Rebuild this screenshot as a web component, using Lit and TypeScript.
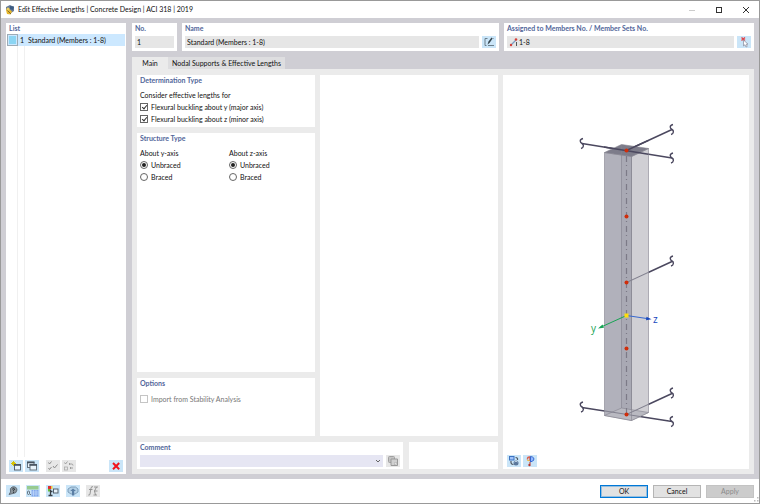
import { LitElement, html, css, svg } from "lit";
import { customElement, property } from "lit/decorators.js";

const icons: Record<string, unknown> = {
  edit: svg`<path d="M5.500 2.500H3V9.500H4.500M6 9.500H12" stroke="#6b7f8c" fill="none"/><path d="M5.500 8.500L6.500 5.500L9.500 1.500L10.600 2.500L7.500 7Z" fill="#34454f"/><path d="M10 2.500H12" stroke="#8a9aa5" stroke-width=".7"/>`,
  pick: svg`<path d="M4.500 1.500L8 4.500M8 1.500L4.500 4.500" stroke="#e0454a" stroke-width="1.400"/><path d="M6.500 4V10L8 8.700L9 11L10.200 10.400L9.300 8.200H11Z" fill="#fff" stroke="#889" stroke-width=".7"/>`,
  create: svg`<path d="M4.500 1V6M2 3.500H7M2.800 1.800L6.200 5.200M6.200 1.800L2.800 5.200" stroke="#d9c400" stroke-width="1"/><rect x="5.500" y="4.500" width="6" height="5.500" fill="#e8f3fb" stroke="#4a5663" stroke-width=".9"/><path d="M5 5H12" stroke="#4a5663" stroke-width="1.600"/>`,
  copy: svg`<rect x="2.500" y="2" width="6.500" height="5.500" fill="#e8f3fb" stroke="#5a6671" stroke-width=".9"/><path d="M2 2.500H9.500" stroke="#45525f" stroke-width="1.600"/><rect x="5" y="4.500" width="6.500" height="5.500" fill="#e8f3fb" stroke="#5a6671" stroke-width=".9"/><path d="M4.500 5H12" stroke="#45525f" stroke-width="1.600"/>`,
  checks: svg`<path d="M2.500 2.500L3.500 4L5.500 1.500M2.500 8L3.500 9.500L5.500 7M7 6L8.500 8L11.500 4.500" fill="none" stroke="#8d8d8d"/>`,
  invert: svg`<path d="M2.500 2.500L3.500 4L5.500 1.500M7 4H9.500Q11 4 11 5.500M8 3L7 4L8 5M11 8H8M9 7L8 8L9 9" fill="none" stroke="#979797" stroke-width=".9"/><rect x="2.500" y="7" width="3" height="3" fill="none" stroke="#aaa" stroke-width=".8"/>`,
  remove: svg`<path d="M4 3L10.200 9.200M10.200 3L4 9.200" stroke="#f1121c" stroke-width="2"/>`,
  help: svg`<path d="M3 9.500L4.500 7Q3.500 3 6 2Q10.500 .800 11 5Q10.500 8.500 7 8.500Z" fill="#8b959c" stroke="#535e67" stroke-width=".8"/><path d="M6.300 4.200Q7.500 2.700 8.600 4L7.500 5.500V6.300M7.500 7V7.800" stroke="#222c33" fill="none"/>`,
  units: svg`<rect x="1" y="1" width="11.500" height="3.500" fill="#97cb90"/><rect x="5.500" y="5" width="7" height="6.500" fill="#82a8ed"/><path d="M7.500 5V11.500M10 5V11.500M5.500 7H12.500M5.500 9H12.500" stroke="#cfe0fb" stroke-width=".6"/><rect x="1.500" y="6" width="2" height="3.500" rx="1" fill="none" stroke="#4c5a66" stroke-width=".8"/><path d="M4.500 9V10" stroke="#4c5a66" stroke-width=".8"/>`,
  display: svg`<rect x="2" y="1" width="3" height="3" fill="#df3131"/><rect x="5" y="1" width="1.500" height="3" fill="#e9cf45"/><rect x="2" y="4" width="2" height="2.500" fill="#65bc37"/><path d="M4.500 4.500V10.500M2.500 10.500H6.500M4.500 6.500H6.500" stroke="#394047" stroke-width="1.300"/><rect x="7.500" y="4" width="4.500" height="4" fill="#e8f3fb" stroke="#53606d"/>`,
  view: svg`<path d="M2 4L5 2H9.500L12 4V7L9 9H5L2 7Z" fill="#b3d0e6" stroke="#6e91ac" stroke-width=".8"/><path d="M7 3.500L10 6H8.200V10.500H6V6H4.200Z" fill="#5b7fa5"/>`,
  formula: svg`<path d="M7 1.700Q5.300 1 4.900 3.500L4 9Q3.600 10.700 2.300 10M3 4.500H6.500M8 2H12M8 6H11.500M7.500 10H11M10.500 2L8.500 6L9.500 10" fill="none" stroke="#8c8c8c" stroke-width=".9"/>`,
  stack: svg`<rect x="2.500" y="1.500" width="6" height="6" rx="1" fill="#c4c4c4" stroke="#a0a0a0"/><path d="M5 4H11.500V10.500H5Z" fill="#d0d0d0" stroke="#999"/><path d="M8.500 10V7.500H11Z" fill="#fff" stroke="#aaa" stroke-width=".6"/>`,
  render: svg`<rect x="2.500" y="1.500" width="4.500" height="3.500" fill="#9fc2fa" stroke="#3b72c0"/><path d="M8.500 2.500Q11 2.500 10.500 5M4 6Q3.500 9.500 6.500 9.500" fill="none" stroke="#4e5964" stroke-width="1.200"/><circle cx="9" cy="8" r="2.500" fill="#5b789c"/><path d="M7.500 7L9 6.200L10.500 7" stroke="#dbe8f5" fill="none" stroke-width=".8"/>`,
  info: svg`<path d="M4.500 4.500Q4.500 1.500 7 2V6" stroke="#d9604f" stroke-width="1.500" fill="none"/><path d="M7.500 1.500Q12 2 10.500 5.500L7.500 7Z" fill="#93b9ff" stroke="#2b60cc" stroke-width=".9"/><path d="M6.500 7.500L7.500 8.500" stroke="#b5372c" stroke-width="1.200"/><circle cx="6.500" cy="10" r="1.200" fill="#b5372c"/><path d="M4 5L6.500 6" stroke="#f0bd37"/>`,
};

@customElement("icon-button")
class IconButton extends LitElement {
  @property() icon = "";
  @property() label = "";
  @property({ type: Boolean }) disabled = false;
  static styles = css`
    :host { display: block; flex: none; }
    button { display: block; width: 14px; height: 12px; padding: 0; border: 0; background: #cae5f8; }
    button:disabled { background: #e7e7e7; }
    svg { display: block; width: 14px; height: 12px; }
  `;
  render() {
    return html`<button aria-label=${this.label} ?disabled=${this.disabled}>
      <svg viewBox="0 0 14 12" fill="none">${icons[this.icon]}</svg>
    </button>`;
  }
}

@customElement("column-view")
class ColumnView extends LitElement {
  static styles = css`
    :host { display: block; flex: 1; min-height: 0; margin: 0 -3px; }
    svg { display: block; width: 100%; height: 100%; }
    .bar { stroke: #4b485f; stroke-width: 1.400; fill: none; }
    .inner { stroke: #82818f; stroke-width: 1; }
    .edge { stroke: #84838f; stroke-width: .6; }
    .axis { font: 10px "Open Sans", sans-serif; }
  `;
  private end(x: number, y: number) {
    return svg`<path class="bar" d="M${x + 1} ${y - 5}C${x - 3} ${y - 4} ${x - 2} ${y - 1} ${x} ${y}S${x + 2} ${y + 4} ${x - 1} ${y + 5}"/>`;
  }
  render() {
    return html`<svg viewBox="503 75 246 380" role="img" aria-label="Column preview">
      <path class="bar" d="M582 143.500L672 158M626.500 150.500L672 129.500M626.500 282.500L672 261.500M582 407.500L672 421.500M626.500 414.500L672 393.500"/>
      <path d="M604.500 152.500L631.500 156.500V420.500L604.500 415.500Z" fill="#adadb7" fill-opacity=".95" class="edge"/>
      <path d="M631.500 156.500L648.500 148.500V412.500L631.500 420.500Z" fill="#cdccd2" fill-opacity=".95" class="edge"/>
      <path d="M621.500 150V408L631.500 410V156Z" fill="#a2a2ad" opacity=".5"/>
      <path d="M604.500 415.500L621.500 408L648.500 412.500L631.500 420.500Z" fill="#b9b9c1" class="edge"/>
      <path d="M604.500 152.500L621.500 144.500L648.500 148.500L631.500 156.500Z" fill="#7d7c8a" class="edge"/>
      <path d="M621.500 145V408M631.500 156V420" class="edge"/>
      <path class="inner" d="M626.500 282.500L648.500 272.300M605 411L640 416.500M626.500 414.500L648.500 404.300"/>
      <path class="bar" d="M604 147L648.500 154.300M626.500 150.500L648.500 140.300"/>
      <path d="M626.500 151V414" stroke="#7c7a87" stroke-width="1.200" stroke-dasharray="1 4 6 3"/>
      ${this.end(582, 143.5)}${this.end(672, 158)}${this.end(672, 129.5)}${this.end(672, 261)}
      ${this.end(582, 407)}${this.end(672, 421.5)}${this.end(672, 393)}
      <path d="M626.500 315.500L600 327.500" stroke="#18a354"/>
      <path d="M598 328.500L602.500 324.500L604 327.800Z" fill="#18a354"/>
      <path d="M626.500 315.500L648 318.700" stroke="#3768cf"/>
      <path d="M651.500 319.200L646.500 316.700L646 320.300Z" fill="#1646bd"/>
      ${[150.5, 216.5, 282.5, 348.5, 414.5].map((y) => svg`<circle cx="626.5" cy=${y} r="2" fill="#d02d0b"/>`)}
      <rect x="624.500" y="313.500" width="4" height="4" fill="#ffdd0c"/>
      <text class="axis" x="591" y="332" fill="#18a354">y</text>
      <text class="axis" x="653" y="323" fill="#1646bd">z</text>
    </svg>`;
  }
}

@customElement("app-root")
class AppRoot extends LitElement {
  static styles = css`
    * { box-sizing: border-box; }
    :host { display: flex; flex-direction: column; box-sizing: border-box; min-height: 100vh; border: 1px solid #999; background: #fff; color: #111; font: 7px/11px Lato, "Open Sans", sans-serif; }
    button, input, select { font: inherit; color: inherit; margin: 0; border-radius: 0; }
    h1, h2, p, fieldset, legend { margin: 0; padding: 0; border: 0; font: inherit; }
    .title { display: flex; align-items: center; height: 17px; padding-left: 4px; gap: 3px; }
    .title h1 { flex: 1; }
    .logo { width: 10px; height: 10px; }
    .window { display: flex; }
    .window button { width: 27px; height: 17px; padding: 0; border: 0; background: none; }
    .window svg { display: block; width: 8px; height: 8px; margin: auto; }
    .main { flex: 1; display: grid; grid-template-columns: 120px minmax(0, 1fr); gap: 6px; padding: 5px; background: #cfced4; }
    .panel { background: #fff; padding: 0 3px; min-width: 0; }
    h2 { color: #52669a; font-weight: 700; }
    .list { display: flex; flex-direction: column; padding: 0 3px 2px; }
    .items { flex: 1; display: grid; grid-template-columns: 11px 7px 1fr; grid-template-rows: 12px 1fr; margin: 0 -2px 3px; }
    .row { display: grid; grid-template-columns: subgrid; grid-column: 1 / -1; align-items: center; background: #cce8ff; }
    .swatch { height: 12px; border: 1px solid #9cabb5; background: #8bd5f3; outline: 1px solid #cce8ff; outline-offset: -2px; }
    .num { text-align: right; padding-right: 1px; }
    .name { padding-left: 3px; }
    .rule { border-right: 1px solid #f0f0f0; }
    .tools { display: flex; gap: 2px; }
    .gap { margin-left: 5px; }
    .end { margin-left: auto; }
    .work { display: flex; flex-direction: column; min-width: 0; }
    .head { display: grid; grid-template-columns: 45px minmax(0, 1fr) 250px; gap: 5px; margin-bottom: 6px; }
    .head .panel { padding-bottom: 3px; }
    .line { display: flex; gap: 3px; margin-top: 2px; }
    .field { flex: 1; display: flex; align-items: center; min-width: 0; height: 12px; background: #e6e6e6; padding: 0 2px; }
    .field input { flex: 1; min-width: 0; width: 100%; height: 12px; padding: 0; border: 0; background: none; outline: 0; }
    .member { width: 10px; height: 10px; flex: none; }
    .tabs { display: flex; height: 12px; }
    .tabs button { width: 36px; padding: 0; border: 0; background: #ebebeb; }
    .tabs .other { width: 117px; background: #dedee0; }
    .content { flex: 1; display: grid; grid-template-columns: minmax(0, 361fr) minmax(0, 246fr); gap: 5px; padding: 6px 5px 5px; background: #ebebeb; }
    .left { display: flex; flex-direction: column; gap: 6px; }
    .upper { flex: 1; display: grid; grid-template-columns: minmax(0, 1fr) minmax(0, 1fr); gap: 5px; }
    .stack { display: flex; flex-direction: column; gap: 6px; }
    .stack h2 { margin-bottom: 4px; }
    .determination { padding-bottom: 2px; }
    .structure { flex: 1; }
    .options { height: 58px; }
    .axes { display: grid; grid-template-columns: 1fr 1fr; gap: 6px; }
    .choice { display: flex; align-items: center; gap: 3px; height: 12px; }
    .choice input { appearance: none; position: relative; width: 8px; height: 8px; border: 1px solid #666; background: #fff; }
    .choice input[type="checkbox"]:checked::after { content: ""; position: absolute; left: 2px; top: 0; width: 2px; height: 4px; border: solid #333; border-width: 0 1px 1px 0; transform: rotate(40deg); }
    .choice input[type="radio"] { border-radius: 50%; }
    .choice input[type="radio"]:checked::after { content: ""; position: absolute; inset: 1px; border-radius: 50%; background: #222; }
    .muted { color: #777; }
    .choice input:disabled { border-color: #c5c5c5; }
    .lower { display: grid; grid-template-columns: minmax(0, 3fr) minmax(0, 1fr); gap: 6px; }
    .comment { padding-bottom: 2px; }
    .combo { flex: 1; display: grid; align-items: center; background: #e6e6f3; }
    .combo select { grid-area: 1 / 1; width: 100%; height: 12px; padding: 0; border: 0; background: none; appearance: none; }
    .combo svg { grid-area: 1 / 1; justify-self: end; width: 6px; height: 6px; margin-right: 2px; pointer-events: none; }
    .view { display: flex; flex-direction: column; padding-bottom: 2px; }
    .view .tools { padding-left: 1px; }
    .footer { display: flex; align-items: center; gap: 5px; height: 24px; padding: 0 5px; }
    .footer .tools { flex: 1; gap: 6px; }
    .footer > button { width: 48px; height: 13px; padding: 0; border: 1px solid #b5b5b5; background: #e2e2e2; line-height: 9px; }
    .footer > .ok { border: 1px solid #0078d7; outline: 1px solid #0078d755; outline-offset: -2px; }
    .footer > button:disabled { color: #8b8b8b; background: #ccc; border-color: #c3c3c3; }
    .grip { align-self: end; width: 5px; height: 5px; margin: 0 -5px 1px; }
  `;

  private radios(axis: string) {
    return html`<fieldset>
      <legend>About ${axis}-axis</legend>
      <label class="choice"><input type="radio" name=${axis} checked />Unbraced</label>
      <label class="choice"><input type="radio" name=${axis} />Braced</label>
    </fieldset>`;
  }

  render() {
    return html`
      <header class="title">
        <svg class="logo" viewBox="0 0 10 10"><path d="M1 2L5 0L9 2V6L6 8L1 5Z" fill="#667b98"/><path d="M5 1L9 1.500L8 5L5 4Z" fill="#3c5c83"/><path d="M1 5L3 3L7 6.500L5.500 9.500L2 9Z" fill="#e7b72b"/><path d="M2 5L6 9" stroke="#846c27"/><circle cx="3" cy="4" r="1.500" fill="#efd15e"/></svg>
        <h1>Edit Effective Lengths | Concrete Design | ACI 318 | 2019</h1>
        <div class="window">
          <button aria-label="Minimize"><svg viewBox="0 0 8 8"><path d="M1 4.500H7" stroke="#ccc"/></svg></button>
          <button aria-label="Maximize"><svg viewBox="0 0 8 8"><rect x="1.500" y="1.500" width="5" height="5" fill="none" stroke="#333"/></svg></button>
          <button aria-label="Close"><svg viewBox="0 0 8 8"><path d="M1 1L7 7M7 1L1 7" stroke="#333"/></svg></button>
        </div>
      </header>
      <main class="main">
        <section class="panel list">
          <h2>List</h2>
          <div class="items">
            <div class="row"><span class="swatch"></span><span class="num">1</span><span class="name">Standard (Members : 1-8)</span></div>
            <span class="rule"></span><span class="rule"></span>
          </div>
          <div class="tools">
            <icon-button icon="create" label="New"></icon-button>
            <icon-button icon="copy" label="Copy"></icon-button>
            <icon-button class="gap" icon="checks" label="Select all" disabled></icon-button>
            <icon-button icon="invert" label="Invert selection" disabled></icon-button>
            <icon-button class="end" icon="remove" label="Delete"></icon-button>
          </div>
        </section>
        <div class="work">
          <div class="head">
            <section class="panel"><h2><label for="no">No.</label></h2><div class="line"><span class="field"><input id="no" value="1" readonly /></span></div></section>
            <section class="panel"><h2><label for="name">Name</label></h2><div class="line"><span class="field"><input id="name" value="Standard (Members : 1-8)" readonly /></span><icon-button icon="edit" label="Edit name"></icon-button></div></section>
            <section class="panel"><h2><label for="assigned">Assigned to Members No. / Member Sets No.</label></h2><div class="line"><span class="field"><svg class="member" viewBox="0 0 10 10"><path d="M2 8L7 3" stroke="#7c9cc2" stroke-width="1.300"/><path d="M7.500 5V9" stroke="#555"/><circle cx="2" cy="8" r="1.200" fill="#d6403a"/><circle cx="7" cy="2.500" r="1.300" fill="#d6403a"/></svg><input id="assigned" value="1-8" readonly /></span><icon-button icon="pick" label="Pick members"></icon-button></div></section>
          </div>
          <div class="tabs" role="tablist"><button role="tab" aria-selected="true">Main</button><button class="other" role="tab" aria-selected="false">Nodal Supports &amp; Effective Lengths</button></div>
          <div class="content">
            <div class="left">
              <div class="upper">
                <div class="stack">
                  <section class="panel determination">
                    <h2>Determination Type</h2>
                    <p>Consider effective lengths for</p>
                    <label class="choice"><input type="checkbox" checked />Flexural buckling about y (major axis)</label>
                    <label class="choice"><input type="checkbox" checked />Flexural buckling about z (minor axis)</label>
                  </section>
                  <section class="panel structure">
                    <h2>Structure Type</h2>
                    <div class="axes">${this.radios("y")}${this.radios("z")}</div>
                  </section>
                  <section class="panel options">
                    <h2>Options</h2>
                    <label class="choice muted"><input type="checkbox" disabled />Import from Stability Analysis</label>
                  </section>
                </div>
                <div class="panel"></div>
              </div>
              <div class="lower">
                <section class="panel comment">
                  <h2><label for="comment">Comment</label></h2>
                  <div class="line">
                    <span class="combo"><select id="comment"><option></option></select><svg viewBox="0 0 6 6"><path d="M1 2L3 4L5 2" fill="none" stroke="#666"/></svg></span>
                    <icon-button icon="stack" label="Comment templates" disabled></icon-button>
                  </div>
                </section>
                <div class="panel"></div>
              </div>
            </div>
            <section class="panel view">
              <column-view></column-view>
              <div class="tools"><icon-button icon="render" label="View mode"></icon-button><icon-button icon="info" label="Legend"></icon-button></div>
            </section>
          </div>
        </div>
      </main>
      <footer class="footer">
        <div class="tools">
          <icon-button icon="help" label="Help"></icon-button>
          <icon-button icon="units" label="Units"></icon-button>
          <icon-button icon="display" label="Display"></icon-button>
          <icon-button icon="view" label="View"></icon-button>
          <icon-button icon="formula" label="Formula" disabled></icon-button>
        </div>
        <button class="ok">OK</button><button>Cancel</button><button disabled>Apply</button>
        <svg class="grip" viewBox="0 0 5 5"><path d="M3 0H4.500V1.500H3ZM3 3H4.500V4.500H3ZM0 3H1.500V4.500H0Z" fill="#bbb"/></svg>
      </footer>
    `;
  }
}
